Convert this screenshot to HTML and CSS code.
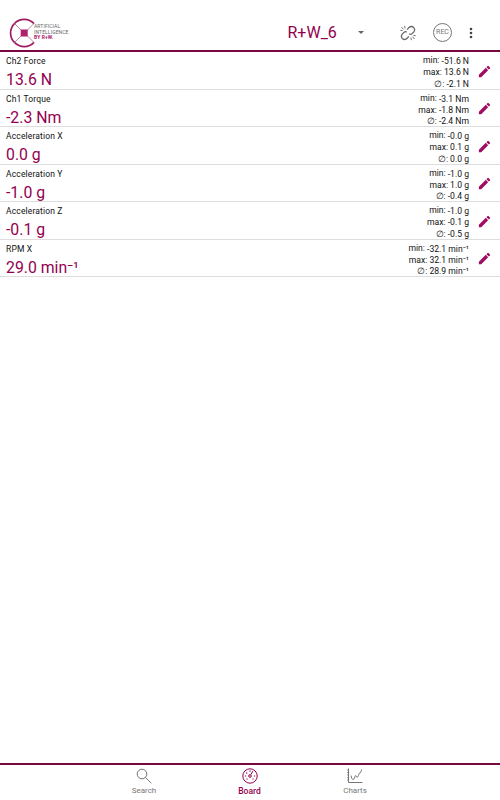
FILE: index.html
```html
<!doctype html>
<html lang="en">
<head>
    <meta charset="UTF-8">
    <meta name="viewport" content="width=device-width, initial-scale=1.0">
    <title>R+W Board</title>
    <link rel="stylesheet" href="styles.css">
</head>
<body>
    <svg class="defs" width="0" height="0">
        <symbol id="pencil" viewBox="0 0 24 24">
            <path d="M3 17.25V21h3.75L17.81 9.94l-3.75-3.75L3 17.25zM20.71 7.04a1 1 0 0 0 0-1.41l-2.34-2.34a1 1 0 0 0-1.41 0l-1.83 1.83 3.75 3.75 1.83-1.83z"/>
        </symbol>
    </svg>

    <header class="topbar">
        <div class="logo">
            <svg width="26" height="30" viewBox="0 0 26 30">
                <path class="ring" d="M25 5.6A13.6 13.6 0 1 0 25 24.4"/>
                <path class="spokes" d="M5.5 5.5 12.5 12.5M5.5 24.5 12.5 17.5M18 12.5l7-7M18 17.5l7 7"/>
                <rect class="core" x="11.7" y="11.5" width="7" height="7"/>
            </svg>
            <p class="logo-text">ARTIFICIAL<br>INTELLIGENCE<br><b>BY R+W.</b></p>
        </div>
        <div class="device">
            <span>R+W_6</span>
            <i class="caret"></i>
        </div>
        <svg class="unlink" width="16" height="16" viewBox="0 0 16 16">
            <path d="M7.2 4.6 8.8 2.7Q11.2.4 13.7 2.6 15.6 4.8 13.6 7.1L11.6 9Q10.4 9.8 9.2 8.8M8.8 11.4 7.2 13.3Q4.8 15.6 2.3 13.4.4 11.2 2.4 8.9L4.4 7Q5.6 6.2 6.8 7.2"/>
            <path class="rays" d="M4.6.8l.5 2.6M1.4 2l2.2 2.4M.3 5.3l2.4.3M11.4 15.2l-.5-2.6M14.6 14l-2.2-2.4M15.7 10.7l-2.4-.3"/>
        </svg>
        <span class="rec">REC</span>
        <svg class="more" width="4" height="12" viewBox="0 0 4 12">
            <circle cx="2" cy="2" r="1.3"/><circle cx="2" cy="6" r="1.3"/><circle cx="2" cy="10" r="1.3"/>
        </svg>
    </header>

    <main class="board">
        <section class="row">
            <div class="channel"><h2>Ch2 Force</h2><p>13.6 N</p></div>
            <div class="stats"><p><span>min:</span> -51.6 N</p><p>max: 13.6 N</p><p>∅: -2.1 N</p></div>
            <svg class="edit"><use href="#pencil"/></svg>
        </section>
        <section class="row">
            <div class="channel"><h2>Ch1 Torque</h2><p>-2.3 Nm</p></div>
            <div class="stats"><p><span>min:</span> -3.1 Nm</p><p>max: -1.8 Nm</p><p>∅: -2.4 Nm</p></div>
            <svg class="edit"><use href="#pencil"/></svg>
        </section>
        <section class="row">
            <div class="channel"><h2>Acceleration X</h2><p>0.0 g</p></div>
            <div class="stats"><p><span>min:</span> -0.0 g</p><p>max: 0.1 g</p><p>∅: 0.0 g</p></div>
            <svg class="edit"><use href="#pencil"/></svg>
        </section>
        <section class="row">
            <div class="channel"><h2>Acceleration Y</h2><p>-1.0 g</p></div>
            <div class="stats"><p><span>min:</span> -1.0 g</p><p>max: 1.0 g</p><p>∅: -0.4 g</p></div>
            <svg class="edit"><use href="#pencil"/></svg>
        </section>
        <section class="row">
            <div class="channel"><h2>Acceleration Z</h2><p>-0.1 g</p></div>
            <div class="stats"><p><span>min:</span> -1.0 g</p><p>max: -0.1 g</p><p>∅: -0.5 g</p></div>
            <svg class="edit"><use href="#pencil"/></svg>
        </section>
        <section class="row">
            <div class="channel"><h2>RPM X</h2><p>29.0 min⁻¹</p></div>
            <div class="stats"><p><span>min:</span> -32.1 min⁻¹</p><p>max: 32.1 min⁻¹</p><p>∅: 28.9 min⁻¹</p></div>
            <svg class="edit"><use href="#pencil"/></svg>
        </section>
    </main>

    <nav class="tabs">
        <a class="tab">
            <svg width="16" height="16" viewBox="0 0 16 16">
                <circle cx="6" cy="6" r="4.8"/>
                <path d="M9.5 9.5 15.3 15.3"/>
            </svg>
            <span>Search</span>
        </a>
        <a class="tab active">
            <svg width="16" height="16" viewBox="0 0 16 16">
                <circle cx="8" cy="8" r="7.2"/>
                <circle cx="8" cy="8" r="1.3"/>
                <path d="M8.8 6.7 10.8 3.2"/>
                <path class="ticks" d="M2.9 8h1.2M11.9 8h1.2M4.4 4.7l.8.8M7.4 3.2h1.2M4.6 11.4l.8-.8M11.4 11.4l-.8-.8"/>
            </svg>
            <span>Board</span>
        </a>
        <a class="tab">
            <svg width="16" height="16" viewBox="0 0 16 16">
                <path d="M1.5.5V14.5H15.5"/>
                <path class="dots" d="M.3 1.5v12"/>
                <path d="M4 7.5Q4.5 11.5 6 11.5 7.5 11.5 8 8.5 8.5 6.5 9.3 8.5 10.5 10.5 11.5 7.5 12 4.5 13 5 14 4.5 14.7 1.5"/>
            </svg>
            <span>Charts</span>
        </a>
    </nav>
</body>
</html>
```

FILE: styles.css
```css
* {
    margin: 0;
    padding: 0;
    box-sizing: border-box;
}

body {
    display: flex;
    flex-direction: column;
    height: 100vh;
    background: #fff;
    color: #111;
    font-family: Roboto, "Noto Sans", sans-serif;
    overflow: hidden;
}

.defs {
    position: absolute;
}

/* top bar */
.topbar {
    display: flex;
    align-items: center;
    height: 52px;
    padding: 15px 27px 0 9px;
    border-bottom: 2px solid #78083f;
}

.logo {
    display: flex;
    align-items: center;
    width: 278.5px;
}

.logo svg {
    fill: none;
}

.ring {
    stroke: #a01c60;
    stroke-width: 1.7;
}

.spokes {
    stroke: #b88aa2;
    stroke-width: 1;
}

.core {
    fill: #b0206c;
}

.logo-text {
    margin-left: -1px;
    color: #666;
    font-size: 5px;
    line-height: 5.5px;
    letter-spacing: 0.1px;
}

.logo-text b {
    color: #b0206c;
}

.device {
    display: flex;
    align-items: center;
    width: 112.5px;
    color: #920050;
    font-size: 16px;
}

.caret {
    margin-left: 21px;
    border: 3.5px solid transparent;
    border-top-color: #666;
    border-bottom: 0;
}

.unlink {
    fill: none;
    stroke: #666;
    stroke-width: 1.3;
}

.rays {
    stroke-width: 0.9;
}

.rec {
    width: 19px;
    height: 19px;
    margin-left: 17px;
    border: 1px solid #777;
    border-radius: 50%;
    color: #777;
    font-size: 7px;
    line-height: 17px;
    text-align: center;
}

.more {
    margin-left: 17px;
    fill: #444;
}

/* channel list */
.board {
    flex: 1;
}

.row {
    display: flex;
    height: 37.5px;
    padding: 0 8px 0 6px;
    border-bottom: 1px solid #ddd;
}

.channel {
    flex: 1;
    padding-top: 4px;
}

.channel h2 {
    font-size: 8.5px;
    font-weight: 400;
    line-height: 11px;
    letter-spacing: 0.15px;
}

.channel p {
    color: #920050;
    font-size: 15.8px;
    line-height: 25.5px;
}

.stats {
    padding-top: 4px;
    font-size: 8.6px;
    line-height: 11.4px;
    text-align: right;
    white-space: nowrap;
}

.stats span {
    position: relative;
    top: -1px;
}

.edit {
    width: 15px;
    height: 15px;
    margin: 11.5px 0 0 8px;
    fill: #a00c62;
}

/* bottom navigation */
.tabs {
    display: flex;
    justify-content: center;
    height: 37px;
    padding-right: 1px;
    border-top: 2px solid #78083f;
}

.tab {
    display: flex;
    flex-direction: column;
    align-items: center;
    width: 105.5px;
    padding-top: 3px;
    color: #777;
    font-size: 8px;
    line-height: 14px;
}

.tab svg {
    fill: none;
    stroke: currentColor;
    stroke-width: 1;
}

.tab.active {
    color: #920050;
    font-size: 8.5px;
    font-weight: 500;
}

.dots {
    stroke-dasharray: 1 1.5;
}

.ticks {
    stroke-width: 1.2;
}
```
